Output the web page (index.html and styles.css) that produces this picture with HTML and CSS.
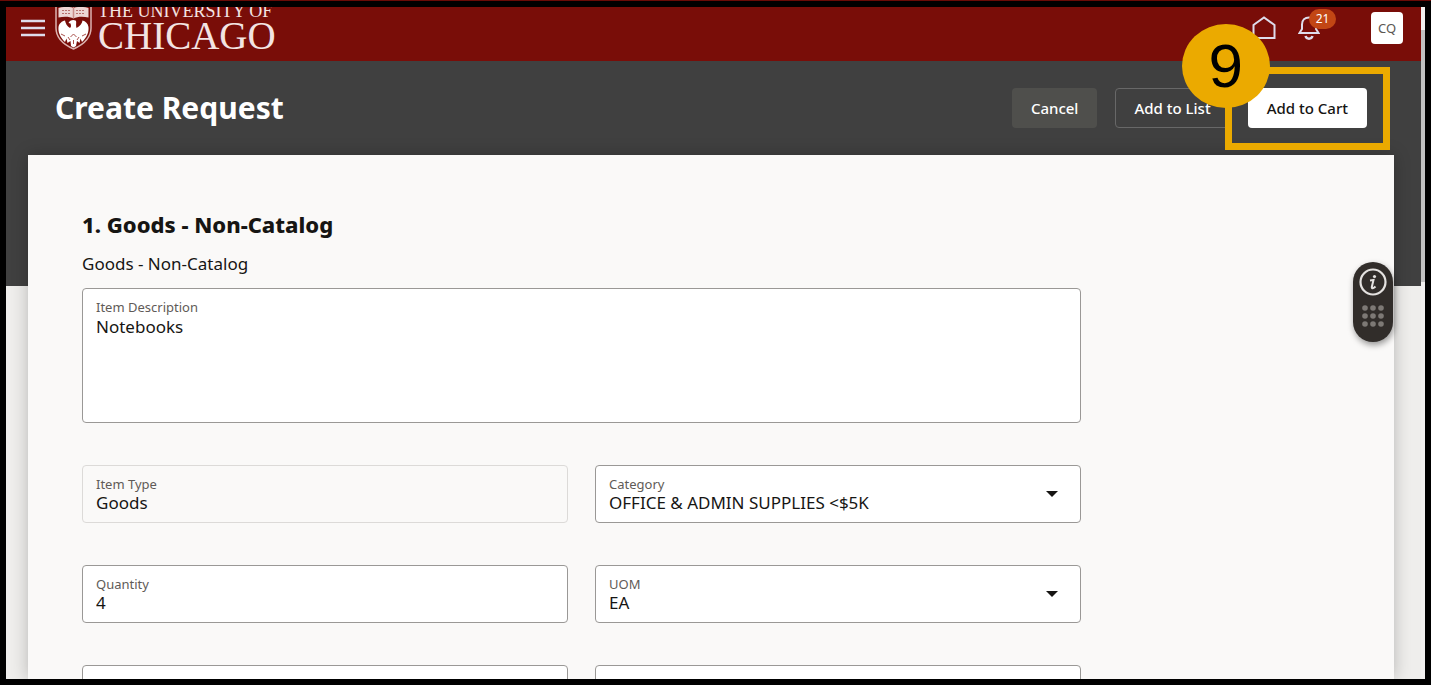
FILE: index.html
```html
<!DOCTYPE html>
<html lang="en">
<head>
<meta charset="utf-8">
<title>Create Request</title>
<link rel="stylesheet" href="styles.css">
</head>
<body>
<div class="frame">
  <div class="app">
    <header class="topbar">
      <button class="icon-btn menu" aria-label="Menu">
        <svg width="24" height="18" viewBox="0 0 24 18"><path d="M0 2h24M0 9h24M0 16h24" stroke="#dedceb" stroke-width="2.600"/></svg>
      </button>
      <a class="logo" href="#">
        <svg class="shield" width="37" height="50" viewBox="0 0 37 50">
          <path d="M1 0V28C1 38 9.500 45 18.500 49C27.500 45 36 38 36 28V0" fill="none" stroke="#dcb3b0" stroke-width="1.500"/>
          <path d="M3.500 8C9 6.500 14.500 6.500 18.500 8C22.500 6.500 28 6.500 33.500 8V17.500C28 16.500 22.500 16.500 18.500 18.500C14.500 16.500 9 16.500 3.500 17.500Z" fill="#edd5d3"/>
          <path d="M7 10.500H16M21 10.500H30M7 13.500H16M21 13.500H30" stroke="#b8706c" stroke-width="1" stroke-dasharray="2 1"/>
          <path d="M7 6V3H30V6M18.500 0V18" fill="none" stroke="#c98d89" stroke-width="1.500"/>
          <path d="M3.500 27C4 23.500 7 21 10 20.500C10.500 23 12 26.500 15 28C16.500 27 16 25 15.500 23.500L13.500 23C14.500 20.500 18 19 20.500 20.500C22 21.500 20.500 24 21.500 28C25 26.500 27 23.500 27.500 20.500C30.500 21 33 23.500 33.500 27C34 32 32 37 27 42L25.500 38.500L24.500 43L22 41L21 46L18.500 47.500L16 46L15.500 41L12.500 43L11.500 38.500L10 42C5 37 3 32 3.500 27Z" fill="#fff"/>
          <path d="M6 34L10 36M31 34L27 36M15.500 37L18.500 34L21.500 37M15 40L13 37M22 40L24 37M18.500 40V44" stroke="#a9504b" stroke-width="1" fill="none"/>
        </svg>
        <span class="wordmark"><span class="wordmark-top">THE UNIVERSITY OF</span><span class="wordmark-main">CHICAGO</span></span>
      </a>
      <nav class="tools" aria-label="Tools">
        <button class="icon-btn" aria-label="Home">
          <svg width="24" height="24" viewBox="0 0 24 24"><path d="M1.500 22V9L12 1.500L22.500 9V22Z" fill="none" stroke="#dedceb" stroke-width="2"/></svg>
        </button>
        <button class="icon-btn bell" aria-label="Notifications">
          <svg width="22" height="24" viewBox="0 0 22 24"><path d="M1.500 17L4 13V8.500C4 4 7 1.500 11 1.500S18 4 18 8.500V13L20.500 17Z" fill="none" stroke="#dedceb" stroke-width="2"/><path d="M7.500 20C8.500 23.500 13.500 23.500 14.500 20" fill="none" stroke="#dedceb" stroke-width="2.500"/></svg>
          <span class="count">21</span>
        </button>
        <button class="avatar">CQ</button>
      </nav>
    </header>
    <main class="page">
      <div class="page-head">
        <h1>Create Request</h1>
        <div class="actions">
          <button class="btn btn-muted">Cancel</button>
          <button class="btn btn-outline">Add to List</button>
          <div class="callout">
            <button class="btn btn-primary">Add to Cart</button>
            <span class="callout-box"></span>
            <span class="callout-step">9</span>
          </div>
        </div>
      </div>
      <form class="card">
        <h2>1. Goods - Non-Catalog</h2>
        <p class="sub">Goods - Non-Catalog</p>
        <div class="fields">
          <div class="field wide">
            <label for="desc">Item Description</label>
            <textarea id="desc">Notebooks</textarea>
          </div>
          <div class="field readonly">
            <label for="type">Item Type</label>
            <input id="type" value="Goods" readonly>
          </div>
          <div class="field">
            <label for="category">Category</label>
            <select id="category"><option>OFFICE &amp; ADMIN SUPPLIES &lt;$5K</option></select>
            <svg class="caret" width="12" height="6" viewBox="0 0 12 6"><path d="M0 0H12L6 6Z" fill="#161513"/></svg>
          </div>
          <div class="field">
            <label for="qty">Quantity</label>
            <input id="qty" value="4">
          </div>
          <div class="field">
            <label for="uom">UOM</label>
            <select id="uom"><option>EA</option></select>
            <svg class="caret" width="12" height="6" viewBox="0 0 12 6"><path d="M0 0H12L6 6Z" fill="#161513"/></svg>
          </div>
          <div class="field"><input aria-label="Next left field"></div>
          <div class="field"><input aria-label="Next right field"></div>
        </div>
      </form>
    </main>
  </div>
  <div class="scrollbar"><div class="thumb"></div></div>
</div>
<div class="helper">
  <button class="icon-btn" aria-label="Information">
    <svg width="28" height="28" viewBox="0 0 28 28"><circle cx="14" cy="14" r="12.500" fill="none" stroke="#e4e2e0" stroke-width="2.200"/><circle cx="15.500" cy="8.500" r="1.600" fill="#e4e2e0"/><path d="M11 12.500L14.500 12L12.800 19C12.600 20.800 14.500 20.500 16.500 18.500" fill="none" stroke="#e4e2e0" stroke-width="2"/></svg>
  </button>
  <button class="icon-btn" aria-label="Move">
    <svg width="24" height="24" viewBox="0 0 24 24" fill="#7d7975"><circle cx="4" cy="4" r="2.800"/><circle cx="12" cy="4" r="2.800"/><circle cx="20" cy="4" r="2.800"/><circle cx="4" cy="12" r="2.800"/><circle cx="12" cy="12" r="2.800"/><circle cx="20" cy="12" r="2.800"/><circle cx="4" cy="20" r="2.800"/><circle cx="12" cy="20" r="2.800"/><circle cx="20" cy="20" r="2.800"/></svg>
  </button>
</div>
</body>
</html>
```
FILE: styles.css
```css
* { box-sizing: border-box; }
body {
  margin: 0;
  height: 100vh;
  overflow: hidden;
  background: #000;
  border-top: 1px solid #6a0b07;
  font-family: "Noto Sans", "Open Sans", sans-serif;
  color: #161513;
  position: relative;
}
.frame { display: flex; height: 100%; padding: 6px; }
.app { flex: 1; min-width: 0; display: flex; flex-direction: column; overflow: hidden; }
.scrollbar { width: 4px; padding-top: 23px; background: #f1f0ef; }
.thumb { height: 252px; background: #c1c1c1; }

button { font: inherit; cursor: pointer; }
.icon-btn { display: block; padding: 0; border: 0; background: none; line-height: 0; }

.topbar {
  flex: none;
  display: flex;
  align-items: flex-end;
  height: 54px;
  padding: 0 18px 9px 15px;
  background: #790d08;
  overflow: hidden;
}
.menu { align-self: center; margin-bottom: 4px; }
.logo { display: flex; align-items: flex-end; gap: 6px; margin-left: 10px; color: #f3e4e3; text-decoration: none; }
.shield { margin-bottom: 2px; }
.wordmark { display: flex; flex-direction: column; font-family: "Liberation Serif", serif; white-space: nowrap; }
.wordmark-top { font-size: 18px; line-height: 18px; }
.wordmark-main { font-size: 39px; line-height: 32px; }
.tools { display: flex; align-items: center; margin-left: auto; padding-bottom: 8px; }
.bell { position: relative; margin-left: 22px; }
.count {
  position: absolute;
  left: 11px;
  top: -7px;
  width: 27px;
  border-radius: 10px;
  background: #c24614;
  color: #fff;
  font-size: 12px;
  line-height: 20px;
  text-align: center;
}
.avatar {
  width: 32px;
  height: 32px;
  margin-left: 51px;
  padding: 0;
  border: 0;
  border-radius: 4px;
  background: #fff;
  color: #5b5652;
  font-size: 13px;
}

.page {
  flex: 1;
  min-height: 0;
  display: flex;
  flex-direction: column;
  padding: 0 27px 0 22px;
  background: linear-gradient(#404040 225px, #efeeec 0);
}
.page-head {
  flex: none;
  display: flex;
  align-items: center;
  justify-content: space-between;
  height: 94px;
  padding: 0 27px;
  position: relative;
  z-index: 1;
}
h1 { margin: 0; color: #fff; font-size: 30px; line-height: 40px; font-weight: 700; }
.actions { display: flex; gap: 18px; }
.btn {
  height: 40px;
  padding: 0 18px;
  border: 1px solid transparent;
  border-radius: 4px;
  color: #fff;
  font-size: 15px;
  font-weight: 500;
  white-space: nowrap;
}
.btn-muted { background: #4f4f4c; }
.btn-outline { background: none; border-color: #686868; }
.btn-primary { background: #fff; color: #161513; }
.callout { position: relative; }
.callout-box { position: absolute; inset: -21px -23px -22px; border: 7px solid #ebaa00; pointer-events: none; }
.callout-step {
  position: absolute;
  left: -66px;
  top: -64px;
  width: 88px;
  border-radius: 50%;
  background: #ebaa00;
  color: #000;
  font: 62px/84px "Liberation Sans", sans-serif;
  text-align: center;
}

.card {
  flex: 1;
  min-height: 0;
  padding: 49px 54px 0;
  background: #faf9f8;
  box-shadow: 0 0 16px rgba(0, 0, 0, 0.24);
}
h2 { margin: 0; font-size: 22px; line-height: 40px; font-weight: 800; }
.sub { margin: 4px 0 8px; font-size: 17px; line-height: 32px; }
.fields { display: grid; grid-template-columns: 1fr 1fr; gap: 42px 27px; max-width: 999px; }
.field {
  position: relative;
  display: flex;
  flex-direction: column;
  height: 58px;
  padding: 9px 13px 0;
  border: 1px solid #9a9896;
  border-radius: 4px;
  background: #fff;
}
.wide { grid-column: 1 / -1; height: 135px; }
.readonly { background: #faf9f8; border-color: #dcdad8; }
.field label { color: #5f5b57; font-size: 13px; line-height: 18px; }
.field input, .field select, .field textarea {
  width: 100%;
  margin: 0;
  padding: 0;
  border: 0;
  outline: 0;
  appearance: none;
  resize: none;
  background: none;
  color: #161513;
  font: inherit;
  font-size: 17px;
  line-height: 20px;
}
.field textarea { flex: 1; line-height: 22px; }
.caret { position: absolute; right: 22px; top: 25px; pointer-events: none; }

.helper {
  position: absolute;
  right: 38px;
  top: 261px;
  display: flex;
  flex-direction: column;
  align-items: center;
  gap: 8px;
  width: 40px;
  padding: 6px 0 14px;
  border-radius: 20px;
  background: #312d2a;
  box-shadow: 1px 3px 6px rgba(0, 0, 0, 0.4);
  z-index: 2;
}
```
